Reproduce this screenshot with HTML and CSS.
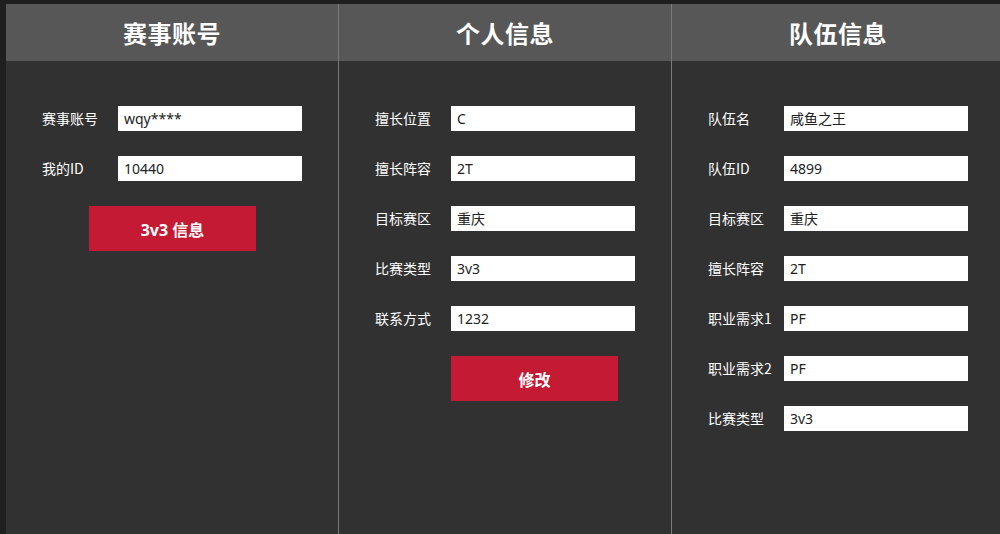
FILE: index.html
```html
<!DOCTYPE html>
<html lang="zh">
<head>
<meta charset="utf-8">
<title>信息</title>
<link rel="stylesheet" href="styles.css">
</head>
<body>
<div class="board">
  <section class="col">
    <header class="col-head">赛事账号</header>
    <div class="col-body">
      <div class="row"><span class="label">赛事账号</span><span class="field">wqy****</span></div>
      <div class="row"><span class="label">我的ID</span><span class="field">10440</span></div>
      <div class="btn-wrap center"><button class="btn">3v3 信息</button></div>
    </div>
  </section>
  <section class="col">
    <header class="col-head">个人信息</header>
    <div class="col-body">
      <div class="row"><span class="label">擅长位置</span><span class="field">C</span></div>
      <div class="row"><span class="label">擅长阵容</span><span class="field">2T</span></div>
      <div class="row"><span class="label">目标赛区</span><span class="field">重庆</span></div>
      <div class="row"><span class="label">比赛类型</span><span class="field">3v3</span></div>
      <div class="row"><span class="label">联系方式</span><span class="field">1232</span></div>
      <div class="btn-wrap indent"><button class="btn">修改</button></div>
    </div>
  </section>
  <section class="col">
    <header class="col-head">队伍信息</header>
    <div class="col-body">
      <div class="row"><span class="label">队伍名</span><span class="field">咸鱼之王</span></div>
      <div class="row"><span class="label">队伍ID</span><span class="field">4899</span></div>
      <div class="row"><span class="label">目标赛区</span><span class="field">重庆</span></div>
      <div class="row"><span class="label">擅长阵容</span><span class="field">2T</span></div>
      <div class="row"><span class="label">职业需求1</span><span class="field">PF</span></div>
      <div class="row"><span class="label">职业需求2</span><span class="field">PF</span></div>
      <div class="row"><span class="label">比赛类型</span><span class="field">3v3</span></div>
    </div>
  </section>
</div>
</body>
</html>
```

FILE: styles.css
```css
html, body {
  margin: 0;
  padding: 0;
  background: #1f1f1f;
  overflow: hidden;
  width: 1000px;
  height: 534px;
}
body {
  font-family: "Noto Sans", "Noto Sans CJK SC", sans-serif;
  color: #fff;
}
.board {
  display: flex;
  margin: 4px 0 0 6px;
  width: 1010px;
  height: 530px;
  background: #313131;
}
.col {
  flex: 0 0 333px;
  box-sizing: border-box;
  border-right: 1px solid #7a7a7a;
  display: flex;
  flex-direction: column;
}
.col-head {
  height: 57px;
  background: #575757;
  display: flex;
  align-items: center;
  justify-content: center;
  font-family: "Noto Sans CJK SC", sans-serif;
  font-weight: 700;
  font-size: 24px;
  line-height: 1;
  letter-spacing: 0.5px;
}
.col-body {
  padding: 45px 0 0 36px;
  display: flex;
  flex-direction: column;
  gap: 25px;
}
.row {
  display: flex;
  align-items: center;
  height: 25px;
}
.label {
  width: 76px;
  font-family: "Noto Sans CJK SC", sans-serif;
  font-size: 14px;
  line-height: 25px;
  color: #fff;
  white-space: nowrap;
}
.field {
  width: 184px;
  height: 25px;
  box-sizing: border-box;
  background: #fff;
  color: #222;
  padding-left: 6px;
  font-family: "Noto Sans", "Noto Sans CJK SC", sans-serif;
  font-size: 14px;
  line-height: 25px;
}
.btn-wrap {
  display: flex;
}
.btn-wrap.center {
  margin-left: 47px;
}
.btn-wrap.indent {
  margin-left: 76px;
}
.btn {
  width: 167px;
  height: 45px;
  border: none;
  background: #c41a33;
  color: #fff;
  font-family: "Noto Sans", "Noto Sans CJK SC", sans-serif;
  font-weight: 700;
  font-size: 16px;
  padding: 0;
  cursor: pointer;
}
```
